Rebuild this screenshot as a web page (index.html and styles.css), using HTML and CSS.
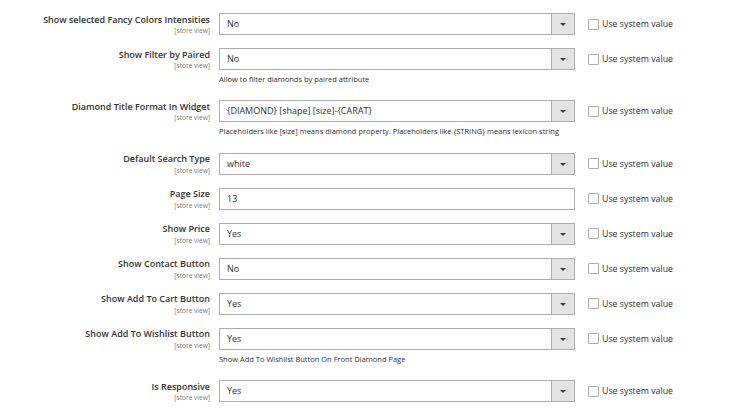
FILE: index.html
```html
<!DOCTYPE html>
<html>
<head>
<meta charset="utf-8">
<link rel="stylesheet" href="styles.css">
</head>
<body>
<div class="form">
  <div class="row">
    <div class="label"><span class="name">Show selected Fancy Colors Intensities</span><span class="scope">[store view]</span></div>
    <div class="control"><div class="select"><span class="value">No</span><span class="btn"><i class="arrow"></i></span></div></div>
    <div class="use"><span class="box"></span><span class="use-text">Use system value</span></div>
  </div>
  <div class="row">
    <div class="label"><span class="name">Show Filter by Paired</span><span class="scope">[store view]</span></div>
    <div class="control"><div class="select"><span class="value">No</span><span class="btn"><i class="arrow"></i></span></div><div class="note">Allow to filter diamonds by paired attribute</div></div>
    <div class="use"><span class="box"></span><span class="use-text">Use system value</span></div>
  </div>
  <div class="row">
    <div class="label"><span class="name">Diamond Title Format In Widget</span><span class="scope">[store view]</span></div>
    <div class="control"><div class="select"><span class="value">{DIAMOND} [shape] [size]-{CARAT}</span><span class="btn"><i class="arrow"></i></span></div><div class="note">Placeholders like [size] means diamond property. Placeholders like {STRING} means lexicon string</div></div>
    <div class="use"><span class="box"></span><span class="use-text">Use system value</span></div>
  </div>
  <div class="row">
    <div class="label"><span class="name">Default Search Type</span><span class="scope">[store view]</span></div>
    <div class="control"><div class="select"><span class="value">white</span><span class="btn"><i class="arrow"></i></span></div></div>
    <div class="use"><span class="box"></span><span class="use-text">Use system value</span></div>
  </div>
  <div class="row">
    <div class="label"><span class="name">Page Size</span><span class="scope">[store view]</span></div>
    <div class="control"><div class="select"><span class="value">13</span></div></div>
    <div class="use"><span class="box"></span><span class="use-text">Use system value</span></div>
  </div>
  <div class="row">
    <div class="label"><span class="name">Show Price</span><span class="scope">[store view]</span></div>
    <div class="control"><div class="select"><span class="value">Yes</span><span class="btn"><i class="arrow"></i></span></div></div>
    <div class="use"><span class="box"></span><span class="use-text">Use system value</span></div>
  </div>
  <div class="row">
    <div class="label"><span class="name">Show Contact Button</span><span class="scope">[store view]</span></div>
    <div class="control"><div class="select"><span class="value">No</span><span class="btn"><i class="arrow"></i></span></div></div>
    <div class="use"><span class="box"></span><span class="use-text">Use system value</span></div>
  </div>
  <div class="row">
    <div class="label"><span class="name">Show Add To Cart Button</span><span class="scope">[store view]</span></div>
    <div class="control"><div class="select"><span class="value">Yes</span><span class="btn"><i class="arrow"></i></span></div></div>
    <div class="use"><span class="box"></span><span class="use-text">Use system value</span></div>
  </div>
  <div class="row">
    <div class="label"><span class="name">Show Add To Wishlist Button</span><span class="scope">[store view]</span></div>
    <div class="control"><div class="select"><span class="value">Yes</span><span class="btn"><i class="arrow"></i></span></div><div class="note">Show Add To Wishlist Button On Front Diamond Page</div></div>
    <div class="use"><span class="box"></span><span class="use-text">Use system value</span></div>
  </div>
  <div class="row">
    <div class="label"><span class="name">Is Responsive</span><span class="scope">[store view]</span></div>
    <div class="control"><div class="select"><span class="value">Yes</span><span class="btn"><i class="arrow"></i></span></div></div>
    <div class="use"><span class="box"></span><span class="use-text">Use system value</span></div>
  </div>
</div>
</body>
</html>
```
FILE: styles.css
```css
html, body {
  margin: 0;
  padding: 0;
  background: #ffffff;
}
body {
  font-family: "Open Sans", "Liberation Sans", sans-serif;
  color: #303030;
}
.form {
  display: flex;
  flex-direction: column;
  gap: 13px;
  padding-top: 13px;
}
.row {
  display: grid;
  grid-template-columns: 210px 356px auto;
  column-gap: 9px;
  align-items: start;
}
.label {
  display: flex;
  flex-direction: column;
  align-items: flex-end;
  text-align: right;
  padding-top: 0.5px;
}
.name {
  font-size: 9px;
  font-weight: 600;
  line-height: 12.4px;
  color: #333333;
}
.scope {
  font-size: 6.6px;
  line-height: 9px;
  color: #7a7a7a;
}
.control {
  display: flex;
  flex-direction: column;
}
.select {
  height: 22px;
  box-sizing: border-box;
  border: 1px solid #adadad;
  display: flex;
  align-items: stretch;
  background: #fff;
}
.value {
  flex: 1;
  font-size: 9px;
  line-height: 20px;
  padding-left: 7px;
  color: #303030;
}
.btn {
  width: 22px;
  background: #e3e3e3;
  border-left: 1px solid #adadad;
  display: flex;
  align-items: center;
  justify-content: center;
}
.arrow {
  width: 0;
  height: 0;
  border-left: 3px solid transparent;
  border-right: 3px solid transparent;
  border-top: 3px solid #41362f;
  margin-top: 1px;
}
.note {
  font-size: 7.5px;
  line-height: 12px;
  margin-top: 3px;
  margin-bottom: 2.4px;
  color: #303030;
}
.use {
  display: flex;
  align-items: center;
  gap: 3px;
  margin-left: 4px;
  height: 22px;
}
.box {
  width: 11px;
  height: 11px;
  box-sizing: border-box;
  border: 1px solid #adadad;
  border-radius: 1px;
  background: #fff;
}
.use-text {
  font-size: 8.8px;
  color: #303030;
}
```
